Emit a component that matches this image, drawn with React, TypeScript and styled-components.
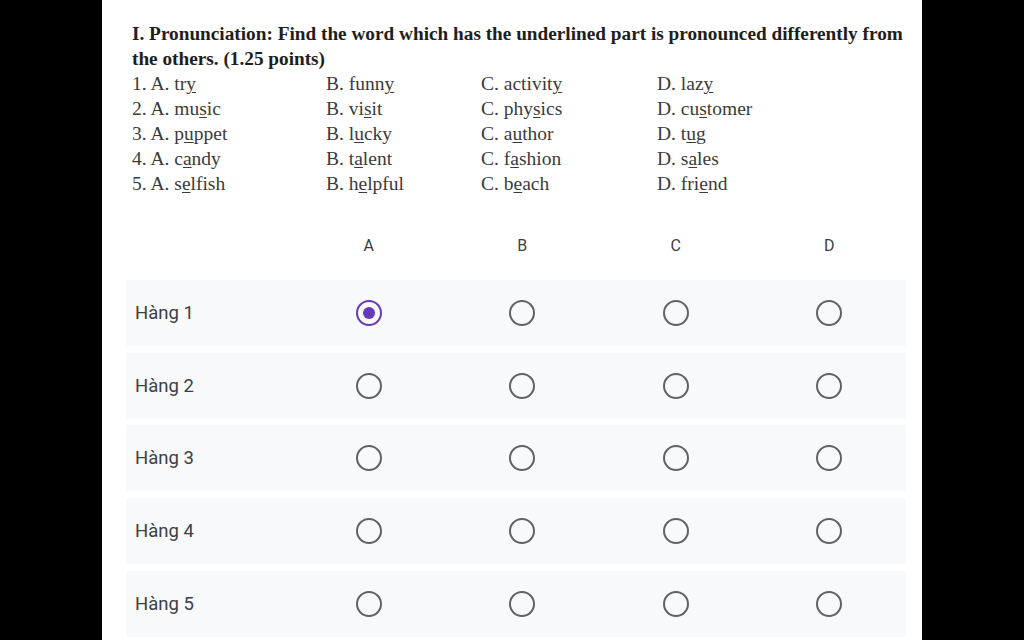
import styled, { createGlobalStyle } from "styled-components";

const GlobalStyle = createGlobalStyle`
  html, body {
    margin: 0;
    padding: 0;
    background: #000;
    height: 100%;
    overflow: hidden;
  }
`;

const Screen = styled.div`
  display: flex;
  padding-left: 102px;
  width: 1024px;
  height: 640px;
  box-sizing: border-box;
  background: #000;
`;

const Page = styled.div`
  width: 820px;
  height: 640px;
  background: #fff;
  padding: 21px 16px 0 24px;
  box-sizing: border-box;
  overflow: hidden;
`;

const Question = styled.div`
  padding-left: 6px;
  font-family: "Liberation Serif", "Times New Roman", serif;
  font-size: 19.5px;
  line-height: 25px;
  color: #3b3b3b;
`;

const Title = styled.div`
  font-weight: bold;
  font-size: 19.25px;
  color: #1e1e1e;
  white-space: nowrap;
`;

const Options = styled.div`
  display: grid;
  grid-template-columns: 194px 155px 176px 1fr;
`;

const U = styled.span`
  text-decoration: underline;
  text-underline-offset: 2px;
  text-decoration-thickness: 1px;
`;

const Matrix = styled.div`
  margin-top: 29px;
  width: 780px;
  font-family: Roboto, "Liberation Sans", Arial, sans-serif;
  color: #202124;
  display: flex;
  flex-direction: column;
  gap: 6.75px;
`;

const HeadRow = styled.div`
  display: grid;
  grid-template-columns: 166px repeat(4, 1fr);
  height: 40px;
  align-items: center;
  margin-bottom: 8px;
`;

const ColHead = styled.div`
  text-align: center;
  font-size: 16px;
  color: #3c4043;
`;

const Row = styled.div`
  display: grid;
  grid-template-columns: 166px repeat(4, 1fr);
  align-items: center;
  height: 66px;
  flex-shrink: 0;
  background: #f8f9fa;
`;

const RowLabel = styled.div`
  padding-left: 9px;
  font-size: 18.5px;
  color: #3c4043;
`;

const Cell = styled.div`
  display: flex;
  justify-content: center;
`;

const Radio = styled.span<{ $on?: boolean }>`
  width: 22px;
  height: 22px;
  border-radius: 50%;
  border: 2px solid ${(p) => (p.$on ? "#673ab7" : "#5f6368")};
  display: flex;
  align-items: center;
  justify-content: center;
  box-sizing: content-box;

  &::after {
    content: "";
    width: 12px;
    height: 12px;
    border-radius: 50%;
    background: ${(p) => (p.$on ? "#673ab7" : "transparent")};
  }
`;

// word parts: [before, underlined, after]
const items: [string, string, string][][] = [
  [["tr", "y", ""], ["funn", "y", ""], ["activit", "y", ""], ["laz", "y", ""]],
  [["mu", "s", "ic"], ["vi", "s", "it"], ["phy", "s", "ics"], ["cu", "s", "tomer"]],
  [["p", "u", "ppet"], ["l", "u", "cky"], ["a", "u", "thor"], ["t", "u", "g"]],
  [["c", "a", "ndy"], ["t", "a", "lent"], ["f", "a", "shion"], ["s", "a", "les"]],
  [["s", "e", "lfish"], ["h", "e", "lpful"], ["b", "e", "ach"], ["fri", "e", "nd"]],
];

const letters = ["A", "B", "C", "D"];

export default function App() {
  return (
    <>
      <GlobalStyle />
      <Screen>
        <Page>
          <Question>
            <Title>
              I. Pronunciation: Find the word which has the underlined part is pronounced differently from
              <br />
              the others. (1.25 points)
            </Title>
            <Options>
              {items.map((row, i) =>
                row.map(([a, u, b], j) => (
                  <div key={`${i}-${j}`}>
                    {j === 0 ? `${i + 1}. ` : ""}
                    {letters[j]}. {a}
                    <U>{u}</U>
                    {b}
                  </div>
                ))
              )}
            </Options>
          </Question>
          <Matrix>
            <HeadRow>
              <div />
              {letters.map((l) => (
                <ColHead key={l}>{l}</ColHead>
              ))}
            </HeadRow>
            {[1, 2, 3, 4, 5].map((n) => (
              <Row key={n}>
                <RowLabel>Hàng {n}</RowLabel>
                {letters.map((l, j) => (
                  <Cell key={l}>
                    <Radio $on={n === 1 && j === 0} />
                  </Cell>
                ))}
              </Row>
            ))}
          </Matrix>
        </Page>
      </Screen>
    </>
  );
}
